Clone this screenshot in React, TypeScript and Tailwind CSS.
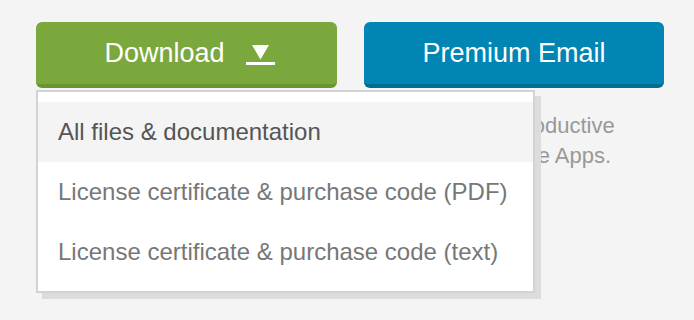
import { useState } from 'react';

const items = [
  'All files & documentation',
  'License certificate & purchase code (PDF)',
  'License certificate & purchase code (text)',
];

function ArrowIcon() {
  return (
    <svg width="29" height="21" viewBox="0 0 29 21" fill="white">
      <polygon points="6,0 23,0 14.5,14.5" />
      <rect x="0" y="17" width="29" height="3" />
    </svg>
  );
}

export default function App() {
  const [active] = useState(0);

  return (
    <div className="min-h-[320px] bg-[#f4f4f4] pl-[36px] pt-[22px] font-['Liberation_Sans',Arial,sans-serif]">
      <div className="flex gap-[27px]">
        <div className="relative">
          <button className="flex h-[66px] w-[301px] items-center justify-center gap-[21px] rounded-[6px] border-b-4 border-[#6a9535] bg-[#7ba83c] pl-[6px] text-[27px] text-white">
            <span>Download</span>
            <span className="mt-[5px]">
              <ArrowIcon />
            </span>
          </button>

          {/* menu */}
          <div className="absolute left-0 top-[68px] z-10 w-[499px] border-2 border-[#d3d3d3] bg-white pb-[9px] pt-[10px] shadow-[6px_6px_0_#dcdcdc]">
            {items.map((label, i) => (
              <div
                key={label}
                className={
                  i === active
                    ? 'flex h-[60px] items-center bg-[#f4f4f4] pl-[20px] text-[24px] text-[#555555]'
                    : 'flex h-[60px] items-center pl-[20px] text-[24px] text-[#777777]'
                }
              >
                {label}
              </div>
            ))}
          </div>
        </div>

        <div className="w-[300px]">
          <button className="flex h-[66px] w-[300px] items-center justify-center rounded-[6px] border-b-4 border-[#006d94] bg-[#0185b4] text-[27px] text-white">
            Premium Email
          </button>
          <p className="mt-[23px] text-[22px] leading-[30px] text-[#999999]">
            Keep the team productive
            <br />
            all day with Google Apps.
          </p>
        </div>
      </div>
    </div>
  );
}
